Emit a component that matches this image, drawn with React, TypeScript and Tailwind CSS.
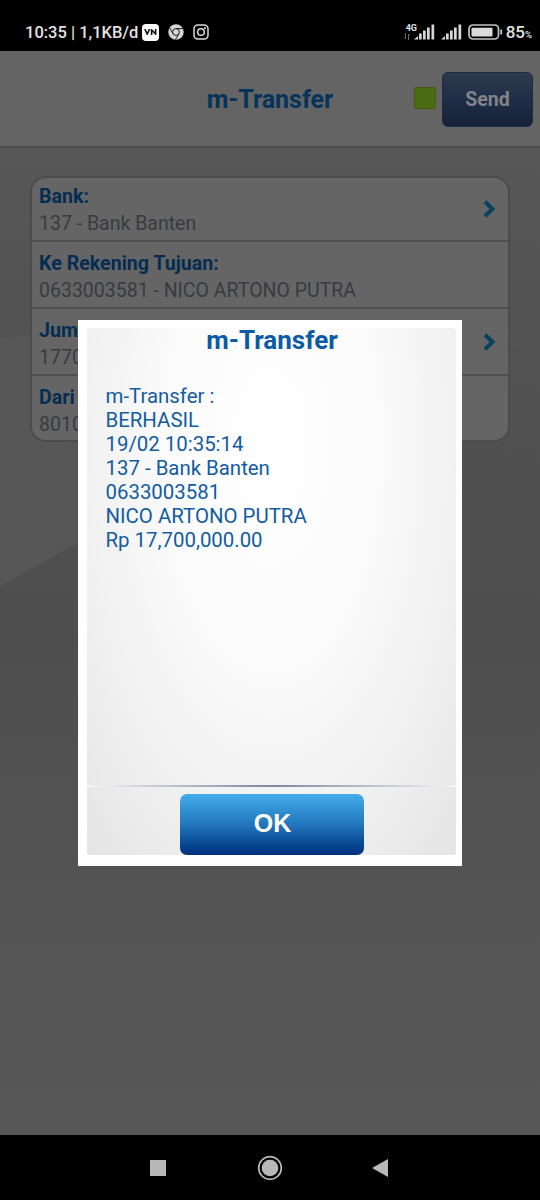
import React from 'react';

interface FieldRow {
  label: string;
  value: string;
  hasArrow?: boolean;
}

const fields: FieldRow[] = [
  { label: 'Bank:', value: '137 - Bank Banten', hasArrow: true },
  { label: 'Ke Rekening Tujuan:', value: '0633003581 - NICO ARTONO PUTRA' },
  { label: 'Jum', value: '1770', hasArrow: true },
  { label: 'Dari', value: '8010' }
];

const receipt = [
  'm-Transfer :',
  'BERHASIL',
  '19/02 10:35:14',
  '137 - Bank Banten',
  '0633003581',
  'NICO ARTONO PUTRA',
  'Rp 17,700,000.00'
];

const SignalBars: React.FC = () => (
  <svg width="21" height="16" viewBox="0 0 21 16" fill="#d8d8d8">
    <path d="M0 15.5 4 12v3.5z" />
    <rect x="5" y="9.5" width="2.7" height="6" />
    <rect x="9" y="6.5" width="2.7" height="9" />
    <rect x="13" y="3.5" width="2.7" height="12" />
    <rect x="17.5" y="0.5" width="2.7" height="15" />
  </svg>
);

const ChromeIcon: React.FC = () => (
  <svg width="16" height="16" viewBox="0 0 16 16">
    <circle cx="8" cy="8" r="7.7" fill="#d6d6d6" />
    <g fill="none" stroke="#222" strokeWidth="1">
      <circle cx="8" cy="8" r="3.4" />
      <path d="M8 4.6h7M5.1 9.8 1.6 3.7M10.9 9.8l-3.5 6" />
    </g>
  </svg>
);

const InstagramIcon: React.FC = () => (
  <svg width="16" height="16" viewBox="0 0 16 16" fill="none" stroke="#d8d8d8" strokeWidth="1.5">
    <rect x="1" y="1" width="14" height="14" rx="3.8" />
    <circle cx="8" cy="8" r="3.3" />
    <circle cx="12" cy="4" r="1" fill="#d8d8d8" stroke="none" />
  </svg>
);

const StatusBar: React.FC = () => (
  <div className="flex h-[51px] items-center bg-black pt-[13px] pl-[25px] pr-2 text-[#e2e2e2]">
    <span className="w-[117px] whitespace-nowrap pt-[2px] text-[16.5px] font-medium">10:35 | 1,1KB/d</span>
    <span className="flex h-[17px] w-[17px] items-center justify-center rounded-[4px] bg-white">
      <svg width="13" height="6" viewBox="0 0 13 6" fill="none" stroke="#111" strokeWidth="1.6">
        <path d="M.8 0 3.2 5 5.6 0M7.6 6V1l4 4V0" />
      </svg>
    </span>
    <span className="ml-[9px]"><ChromeIcon /></span>
    <span className="ml-[9px]"><InstagramIcon /></span>

    <div className="ml-auto flex items-center">
      <div className="mr-[-7px] flex h-[17px] w-[16px] flex-col">
        <span className="pl-[1px] text-[9px] font-bold leading-[8px]">4G</span>
        <svg className="-ml-[1px] mt-[1px]" width="6" height="7" viewBox="0 0 6 7" fill="none" stroke="#666">
          <path d="M1.5 0v6M0 4.5 1.5 6M4.5 7V1M4.5 1 6 2.5" />
        </svg>
      </div>
      <SignalBars />
      <span className="ml-[6px]"><SignalBars /></span>
      <svg className="ml-[6px]" width="35" height="16" viewBox="0 0 35 16">
        <rect x="1" y="1" width="29.5" height="14" rx="4" fill="none" stroke="#c4c4c4" strokeWidth="1.7" />
        <rect x="3.5" y="3.8" width="21" height="8.6" rx="1" fill="#dadada" />
        <path d="M33.2 5.5v5" stroke="#c4c4c4" strokeWidth="1.8" />
      </svg>
      <span className="ml-[3px] text-[17px] font-medium leading-5">85</span>
      <span className="mt-[6px] text-[9.5px] font-medium leading-[12px]">%</span>
    </div>
  </div>
);

const Header: React.FC = () => (
  <div className="grid h-[97px] grid-cols-[1fr_auto_1fr] items-center border-b-2 border-[#4b4b4b] bg-[#646464] px-[7px] pt-[1px]">
    <span />
    <h1 className="pt-[2px] text-[25px] font-bold text-[#05335b]">m-Transfer</h1>
    <div className="flex items-center justify-end gap-[6px]">
      <span className="mb-[2px] h-[22px] w-[22px] rounded-[2px] border border-[#3f5c0e] bg-[#4a6b12]" />
      <button className="h-[55px] w-[91px] rounded-[6px] border border-[#1d2b47] bg-gradient-to-b from-[#2f3b4d] via-[#1f2d47] to-[#172238] pt-[2px] text-[19.5px] font-bold text-[#828488]">
        Send
      </button>
    </div>
  </div>
);

const FieldList: React.FC = () => (
  <div className="mx-[30px] mt-[28px] h-[266px] overflow-hidden rounded-[16px] border-2 border-[#4c4c4c] bg-[#656565]">
    {fields.map((field) => (
      <div
        key={field.label}
        className="group flex h-[67px] items-center justify-between border-b-2 border-[#4f4f4f] pl-[7px] pr-[12px] first:h-[64px] last:h-[64px] last:border-b-0"
      >
        <div className="self-start whitespace-nowrap pt-[9px] group-first:pt-[6px]">
          <div className="text-[19.6px] font-bold leading-[26px] text-[#052d52]">{field.label}</div>
          <div className="text-[19.5px] leading-[27px] text-[#393b3f]">{field.value}</div>
        </div>
        {field.hasArrow && (
          <svg width="13" height="18" viewBox="0 0 13 18" fill="none" stroke="#09425e" strokeWidth="4">
            <path d="M2 1.8 9.5 9 2 16.2" />
          </svg>
        )}
      </div>
    ))}
  </div>
);

const TransferDialog: React.FC = () => (
  <div className="absolute left-[78px] top-[320px] h-[546px] w-[384px] bg-white pt-2 pr-[6px] pb-[11px] pl-[9px]">
    <div className="flex h-full flex-col rounded-[3px] bg-[radial-gradient(ellipse_62%_90%_at_50%_22%,#ffffff_0%,#fbfbfb_45%,#efefef_88%,#e0e0e0_130%)]">
      <h2 className="h-[44px] pl-[1px] text-center text-[26px] font-bold leading-[25px] text-[#0a5aa5]">m-Transfer</h2>
      <div className="flex-1 pl-[18.5px] pt-[12px] text-[20.4px] leading-[24px] text-[#125ca2]">
        {receipt.map((line) => (
          <p key={line}>{line}</p>
        ))}
      </div>
      <div className="h-[2px] bg-gradient-to-r from-[#f5f5f5] via-[#7f88a0] to-[#f5f5f5]" />
      <div className="flex h-[68px] justify-center pt-[7px]">
        <button className="h-[61px] w-[184px] rounded-[7px] bg-gradient-to-b from-[#43adec] via-[#2376bc] to-[#002f7d] pb-[2px] pl-[2px] font-['Liberation_Sans',sans-serif] text-[25px] font-bold text-white">
          OK
        </button>
      </div>
    </div>
  </div>
);

const NavigationBar: React.FC = () => (
  <div className="flex h-[65px] items-center justify-center bg-black">
    <svg width="240" height="26" viewBox="0 0 240 26" fill="#b8b8b8">
      <rect x="0" y="5" width="16" height="16" />
      <circle cx="120" cy="13" r="8.3" />
      <circle cx="120" cy="13" r="11.3" fill="none" stroke="#b8b8b8" strokeWidth="1.7" />
      <path d="M222 13 238 4v18z" />
    </svg>
  </div>
);

const App: React.FC = () => {
  return (
    <div className="relative flex h-[1200px] w-[540px] flex-col overflow-hidden bg-black font-[Roboto,sans-serif]">
      <StatusBar />
      <Header />
      <main className="relative flex-1 overflow-hidden bg-[linear-gradient(to_bottom,#575757_0%,#515151_25%,#4e4e4e_50%,#545454_75%,#575757_100%)]">
        {/* Faint diagonal highlight of the wallpaper */}
        <svg className="absolute inset-0" width="540" height="440" viewBox="0 0 540 440">
          <defs>
            <linearGradient id="highlight" x1="0" y1="0" x2="1" y2="0">
              <stop offset="0" stopColor="#575757" />
              <stop offset="1" stopColor="#535353" />
            </linearGradient>
          </defs>
          <path d="M0 190Q270 170 540 190L78 395 0 438z" fill="url(#highlight)" />
        </svg>
        <div className="relative">
          <FieldList />
        </div>
      </main>
      <NavigationBar />
      <TransferDialog />
    </div>
  );
};

export default App;
